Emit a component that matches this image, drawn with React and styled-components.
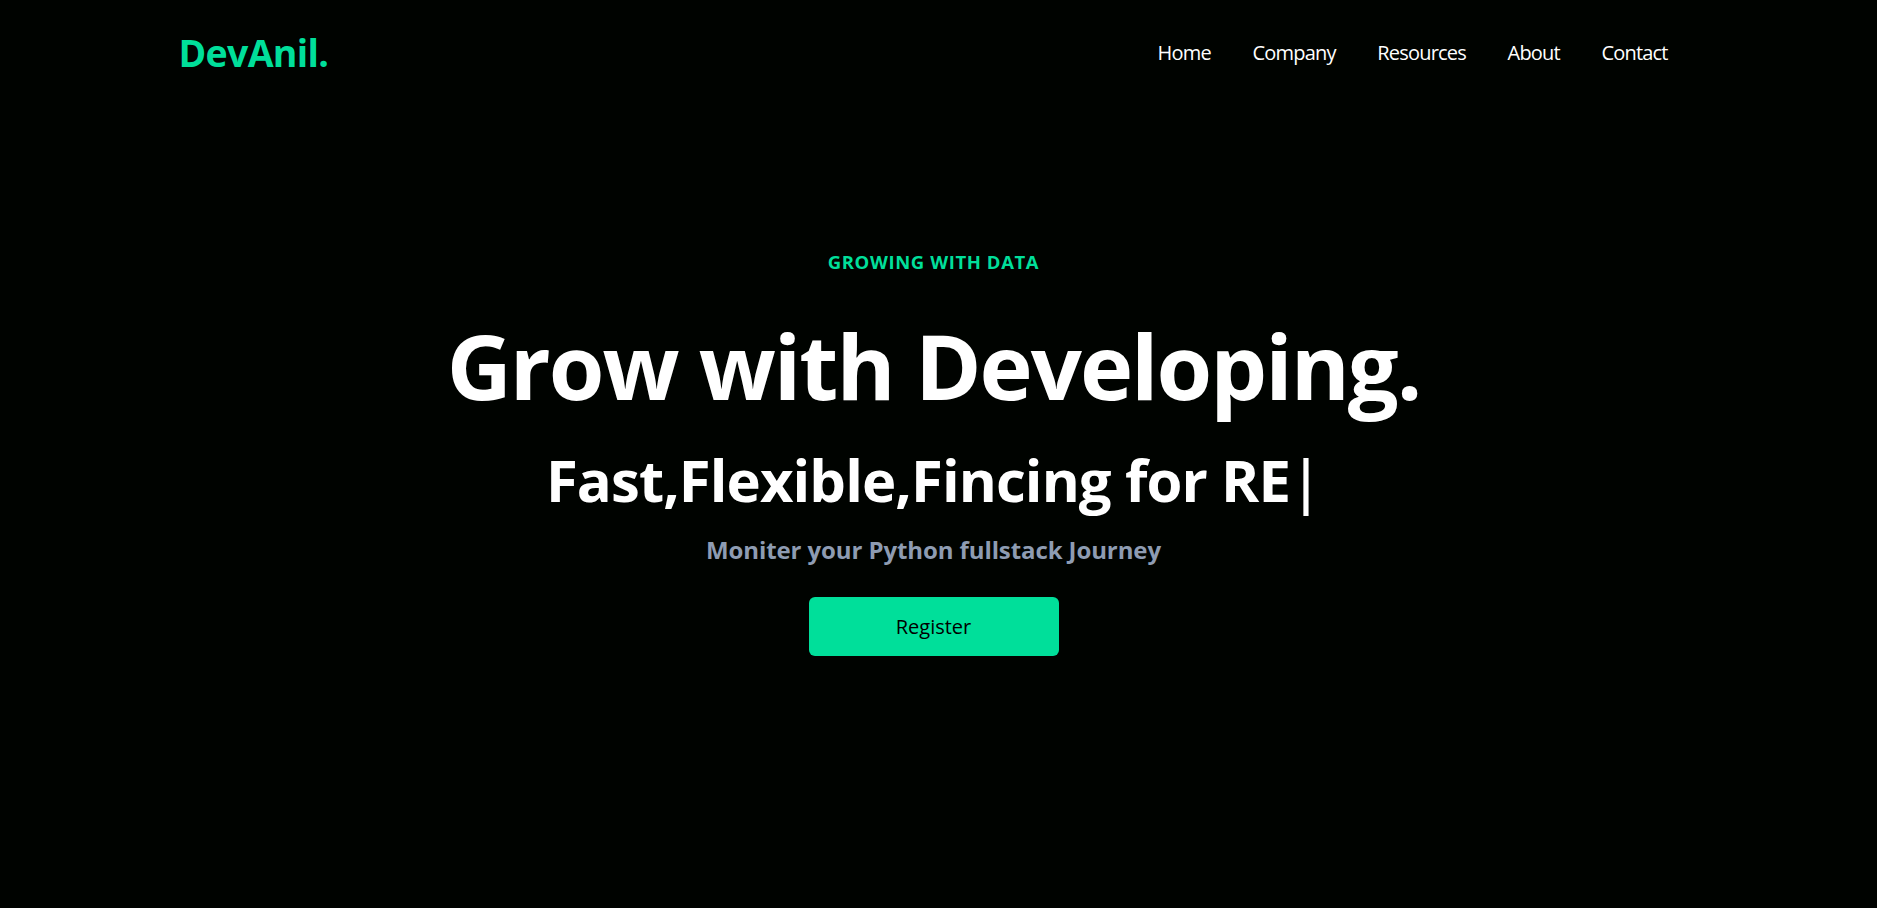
import React from "react";
import styled, { createGlobalStyle } from "styled-components";

const GlobalStyle = createGlobalStyle`
  * { box-sizing: border-box; }
  html, body { margin: 0; padding: 0; background: #000300; }
  body { font-family: "Open Sans", "Noto Sans", sans-serif; color: #ffffff; }
`;

const Page = styled.div`
  min-height: 908px;
  background: #000300;
  padding-right: 10px;
`;

const Header = styled.header`
  max-width: 1550px;
  margin: 0 auto;
  height: 106px;
  padding: 0 20px;
  display: flex;
  align-items: center;
  justify-content: space-between;
`;

const Logo = styled.h1`
  margin: 0;
  font-size: 37.5px;
  line-height: 1;
  font-weight: 700;
  letter-spacing: -0.7px;
  color: #00df9a;
`;

const NavList = styled.ul`
  list-style: none;
  margin: 0;
  padding: 0;
  display: flex;
`;

const NavItem = styled.li`
  padding: 0 20.8px;
  font-size: 20px;
  line-height: 1;
  letter-spacing: -0.8px;
  color: #ffffff;
`;

const Hero = styled.main`
  display: flex;
  flex-direction: column;
  align-items: center;
  text-align: center;
  padding-top: 147px;
`;

const Eyebrow = styled.p`
  margin: 0;
  font-size: 18.5px;
  line-height: 1;
  font-weight: 700;
  letter-spacing: 0.6px;
  color: #00df9a;
`;

const Title = styled.h1`
  margin: 48px 0 0;
  font-size: 90px;
  line-height: 1;
  font-weight: 700;
  letter-spacing: -2px;
  color: #ffffff;
`;

const Tagline = styled.div`
  margin: 41px 0 0;
  font-size: 58px;
  line-height: 1;
  font-weight: 700;
  letter-spacing: -0.9px;
  white-space: nowrap;
  color: #ffffff;
`;

const Typed = styled.span`
  padding-left: 0;
`;

const Cursor = styled.span`
  font-weight: 600;
  margin-left: 0;
`;

const Subtitle = styled.p`
  margin: 29px 0 0;
  font-size: 24px;
  line-height: 1;
  font-weight: 700;
  letter-spacing: -0.1px;
  color: #8e9cb2;
`;

const Button = styled.button`
  margin-top: 35px;
  width: 250px;
  height: 59px;
  border: none;
  border-radius: 6px;
  background: #00df9a;
  color: #000000;
  font-family: inherit;
  font-size: 20px;
  font-weight: 400;
  cursor: pointer;
`;

const links = ["Home", "Company", "Resources", "About", "Contact"];

export default function App() {
  return (
    <>
      <GlobalStyle />
      <Page>
        <Header>
          <Logo>DevAnil.</Logo>
          <NavList>
            {links.map((l) => (
              <NavItem key={l}>{l}</NavItem>
            ))}
          </NavList>
        </Header>
        <Hero>
          <Eyebrow>GROWING WITH DATA</Eyebrow>
          <Title>Grow with Developing.</Title>
          <Tagline>
            Fast,Flexible,Fincing for{" "}
            <Typed>
              RE<Cursor>|</Cursor>
            </Typed>
          </Tagline>
          <Subtitle>Moniter your Python fullstack Journey</Subtitle>
          <Button>Register</Button>
        </Hero>
      </Page>
    </>
  );
}
